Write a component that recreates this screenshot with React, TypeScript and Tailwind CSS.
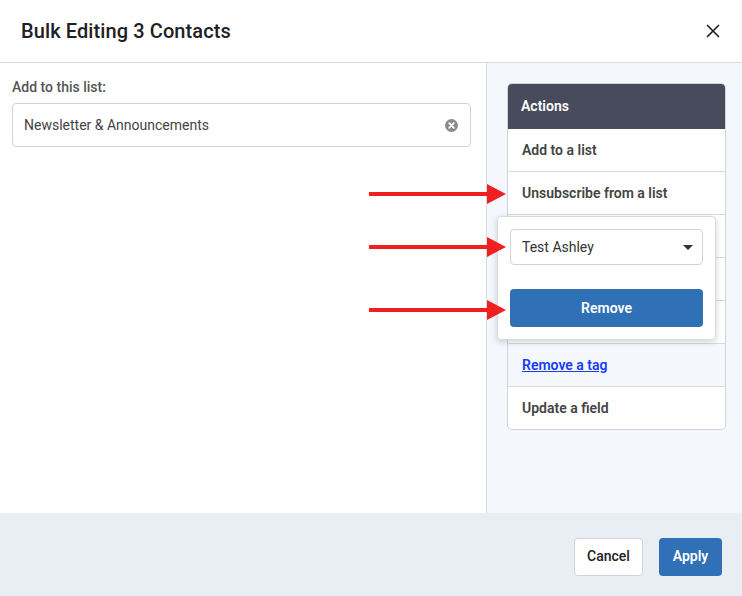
import { X } from "lucide-react";

// rows 3-5 sit under the popover, so only their borders show
const rows = ["Add to a list", "Unsubscribe from a list", "", "", ""];

function Arrow({ top }: { top: number }) {
  return (
    <div className="absolute left-[369px] flex items-center" style={{ top }}>
      <div className="h-[4px] w-[118px] bg-[#f02020]" />
      <div className="h-0 w-0 border-y-[10px] border-l-[19px] border-y-transparent border-l-[#f02020]" />
    </div>
  );
}

export default function App() {
  return (
    <div
      className="relative flex h-[596px] w-[742px] flex-col bg-white text-[#444]"
      style={{ fontFamily: "Roboto, 'Noto Sans', sans-serif" }}
    >
      <header className="flex h-[63px] items-center justify-between border-b border-[#d8dbe2] pl-[21px] pr-[18px]">
        <h1 className="text-[20px] font-medium tracking-[0.1px] text-[#1f2024]">Bulk Editing 3 Contacts</h1>
        <X size={22} strokeWidth={1.8} className="text-[#1f2024]" />
      </header>

      <main className="flex flex-1">
        <div className="w-[487px] border-r border-[#d8dbe2] px-3 pt-[14px]">
          <label className="block text-[14px] font-medium text-[#555]">Add to this list:</label>
          <div className="mt-[5px] flex h-[44px] w-[459px] items-center justify-between rounded border border-[#cfd3dc] pl-[11px] pr-[12px]">
            <span className="text-[14px] text-[#444]">Newsletter &amp; Announcements</span>
            <svg width="13" height="13" viewBox="0 0 16 16">
              <circle cx="8" cy="8" r="8" fill="#8a8a8a" />
              <path d="M5.2 5.2l5.6 5.6M10.8 5.2l-5.6 5.6" stroke="#fff" strokeWidth="2.2" strokeLinecap="round" />
            </svg>
          </div>
        </div>

        <div className="flex-1 bg-[#f4f7fc] pl-5 pt-5">
          <div className="relative w-[219px]">
            <div className="overflow-hidden rounded-[5px] border border-[#cfd3dc] bg-white">
              <div className="flex h-[45px] items-center bg-[#474b5c] px-[13px] text-[14px] font-semibold text-white">
                Actions
              </div>
              {rows.map((r, i) => (
                <div
                  key={i}
                  className="flex h-[43px] items-center border-b border-[#d8dbe2] px-[14px] text-[14px] font-semibold text-[#444]"
                >
                  {r}
                </div>
              ))}
              <div className="flex h-[43px] items-center border-b border-[#d8dbe2] bg-[#f4f7fc] px-[14px] text-[14px] font-semibold text-[#1a3cf0] underline">
                Remove a tag
              </div>
              <div className="flex h-[42px] items-center px-[14px] text-[14px] font-semibold text-[#444]">
                Update a field
              </div>
            </div>

            <div className="absolute left-[-10px] top-[133px] w-[219px] rounded border border-[#d8dbe2] bg-white px-3 pb-[12px] pt-[12px] shadow-[0_2px_6px_rgba(0,0,0,0.18)]">
              <div className="flex h-[36px] items-center justify-between rounded border border-[#cfd3dc] pl-[11px] pr-[9px] text-[14px] text-[#333]">
                <span>Test Ashley</span>
                <div className="h-0 w-0 border-x-[5px] border-t-[5px] border-x-transparent border-t-[#333]" />
              </div>
              <button className="mt-[24px] flex h-[38px] w-full items-center justify-center rounded bg-[#3070b6] text-[14px] font-semibold text-white">
                Remove
              </button>
            </div>
          </div>
        </div>
      </main>

      <footer className="flex h-[83px] items-center justify-end gap-4 bg-[#e9edf4] pr-5 pt-[4px]">
        <button className="h-[38px] w-[69px] rounded border border-[#cfd3dc] bg-white text-[14px] font-medium text-[#222]">
          Cancel
        </button>
        <button className="h-[38px] w-[63px] rounded bg-[#3070b6] text-[14px] font-semibold text-white">
          Apply
        </button>
      </footer>

      <Arrow top={184} />
      <Arrow top={237} />
      <Arrow top={300} />
    </div>
  );
}
